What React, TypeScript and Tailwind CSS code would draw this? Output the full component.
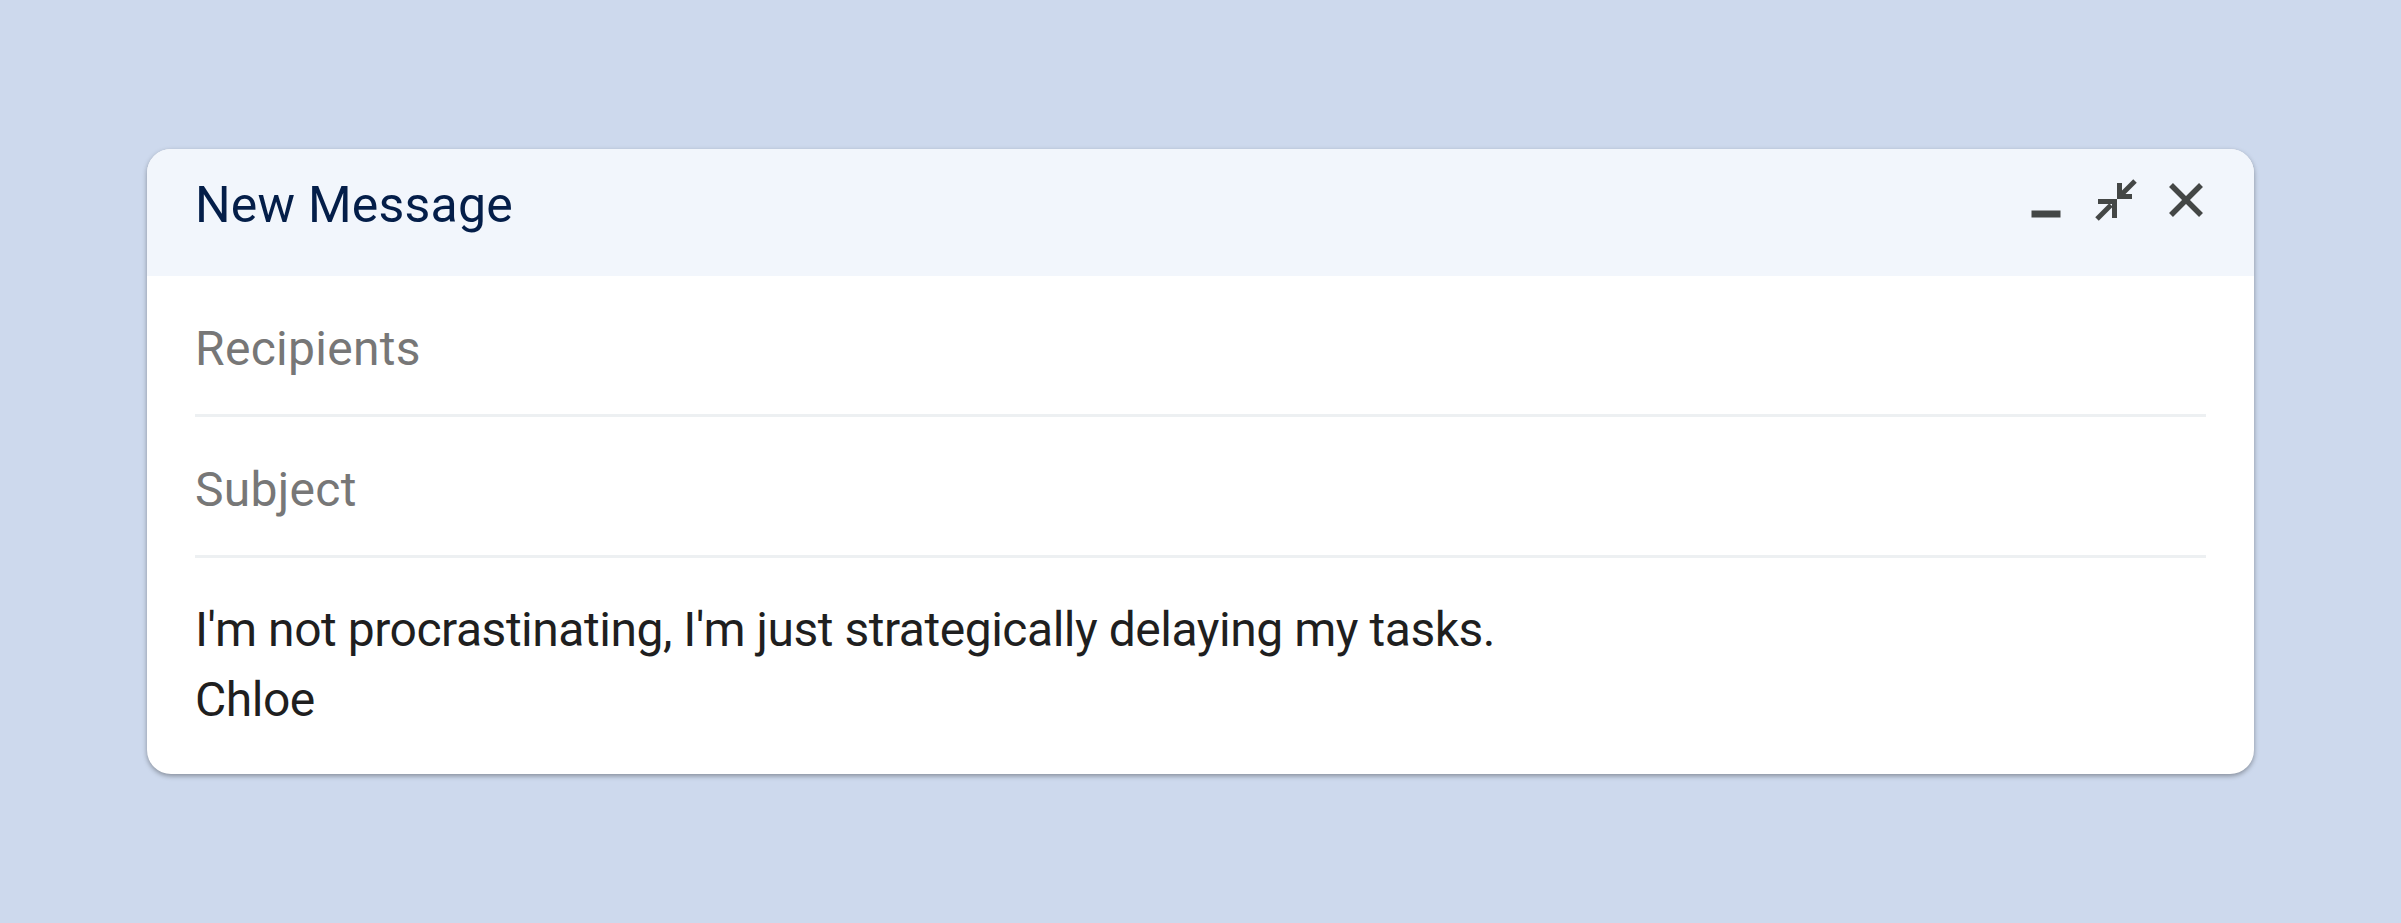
export default function App() {
  return (
    <div className="min-h-screen w-full bg-[#cdd9ed] flex items-center justify-center font-['Roboto',sans-serif]">
      <div className="w-[2107px] bg-white rounded-[24px] overflow-hidden shadow-[0_2px_5px_rgba(0,0,0,0.35)]">
        {/* Header */}
        <div className="h-[127px] bg-[#f2f6fc] flex items-start justify-between pl-12 pr-[33px]">
          <h1 className="mt-[28px] text-[50px] leading-[56px] text-[#041e49] font-normal tracking-[0.2px]">New Message</h1>
          <div className="mt-4 flex">
            <button className="w-[70px] h-[70px] flex items-center justify-center" aria-label="Minimize">
              <svg width="70" height="70" viewBox="0 0 70 70">
                <rect x="20.5" y="45.5" width="29" height="7" fill="#444746" />
              </svg>
            </button>
            <button className="w-[70px] h-[70px] flex items-center justify-center" aria-label="Exit full screen">
              <svg width="42" height="42" viewBox="0 0 42 42" fill="none" stroke="#444746" strokeWidth="5">
                <path d="M24.5 4V17.5H37" />
                <path d="M40 2L26 16" />
                <path d="M3 22.5H19.5V39" />
                <path d="M2 40L16 26" />
              </svg>
            </button>
            <button className="w-[70px] h-[70px] flex items-center justify-center" aria-label="Close">
              <svg width="34" height="34" viewBox="0 0 34 34" fill="none" stroke="#444746" strokeWidth="5.5">
                <path d="M2 2L32 32" />
                <path d="M32 2L2 32" />
              </svg>
            </button>
          </div>
        </div>

        {/* Fields */}
        <div className="mx-12 border-b-[3px] border-[#edf0f2] pt-[45px] pb-[37px] text-[48px] leading-[56px] tracking-[0.3px] text-[#777777]">
          Recipients
        </div>
        <div className="mx-12 border-b-[3px] border-[#edf0f2] pt-[45px] pb-[37px] text-[48px] leading-[56px] tracking-[0.3px] text-[#777777]">
          Subject
        </div>

        {/* Body */}
        <div className="px-12 pt-[37px] pb-[39px] text-[48px] leading-[70px] tracking-[-0.47px] text-[#1f1f1f]">
          <p>I'm not procrastinating, I'm just strategically delaying my tasks.</p>
          <p>Chloe</p>
        </div>
      </div>
    </div>
  );
}
